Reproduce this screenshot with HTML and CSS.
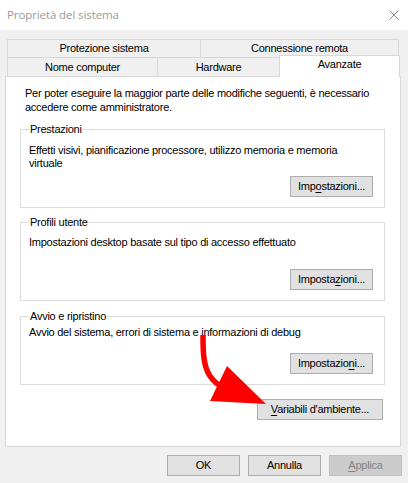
FILE: index.html
```html
<!DOCTYPE html>
<html lang="it">
<head>
<meta charset="utf-8">
<title>Proprietà del sistema</title>
<link rel="stylesheet" href="styles.css">
</head>
<body>
<div class="window">
  <div class="titlebar">
    <span class="title">Proprietà del sistema</span>
    <svg class="close" width="10" height="10" viewBox="0 0 10 10"><path d="M0.5 0.5 L9.5 9.5 M9.5 0.5 L0.5 9.5" stroke="#8c8c8c" stroke-width="1" fill="none"/></svg>
  </div>
  <div class="content">
    <div class="tabs">
      <div class="tabrow row1">
        <div class="tab t-prot">Protezione sistema</div>
        <div class="tab t-conn">Connessione remota</div>
      </div>
      <div class="tabrow row2">
        <div class="tab t-nome">Nome computer</div>
        <div class="tab t-hw">Hardware</div>
        <div class="tab active t-adv">Avanzate</div>
      </div>
    </div>
    <div class="panel">
      <p class="intro">Per poter eseguire la maggior parte delle modifiche seguenti, è necessario accedere come amministratore.</p>
      <fieldset class="group g-perf">
        <legend>Prestazioni</legend>
        <p class="gtext">Effetti visivi, pianificazione processore, utilizzo memoria e memoria virtuale</p>
        <div class="btnrow"><button class="btn set">Imp<u>o</u>stazioni...</button></div>
      </fieldset>
      <fieldset class="group g-prof">
        <legend>Profili utente</legend>
        <p class="gtext">Impostazioni desktop basate sul tipo di accesso effettuato</p>
        <div class="btnrow"><button class="btn set">Imposta<u>z</u>ioni...</button></div>
      </fieldset>
      <fieldset class="group g-boot">
        <legend>Avvio e ripristino</legend>
        <p class="gtext">Avvio del sistema, errori di sistema e informazioni di debug</p>
        <div class="btnrow"><button class="btn set">Impostazio<u>n</u>i...</button></div>
      </fieldset>
      <div class="envrow"><button class="btn env"><u>V</u>ariabili d'ambiente...</button></div>
    </div>
    <div class="footer">
      <button class="btn foot">OK</button>
      <button class="btn foot">Annulla</button>
      <button class="btn foot disabled"><u>A</u>pplica</button>
    </div>
  </div>
  <svg class="arrow" width="408" height="483" viewBox="0 0 408 483">
    <path d="M203 335 C203 350 203 366 210 376 C214 382 218 385 224 388" stroke="#ff0000" stroke-width="5.5" fill="none" stroke-linecap="butt"/>
    <polygon points="227,366 210,401 266,404" fill="#ff0000"/>
  </svg>
</div>
</body>
</html>
```
FILE: styles.css
```css
html, body {
  margin: 0;
  padding: 0;
}
body {
  background: #f0f0f0;
  font-family: "Liberation Sans", Arial, sans-serif;
  font-size: 11px;
  letter-spacing: -0.25px;
  color: #000;
  width: 408px;
  height: 483px;
  overflow: hidden;
}
.window {
  position: relative;
  width: 408px;
  height: 483px;
}
.titlebar {
  height: 30px;
  background: #fff;
  display: flex;
  align-items: center;
  justify-content: space-between;
  padding: 0 9px 0 7px;
  box-sizing: border-box;
}
.title {
  font-family: "Open Sans", "Noto Sans", sans-serif;
  font-size: 11.5px;
  letter-spacing: -0.1px;
  color: #999999;
  margin-top: -1px;
}
.close {
  display: block;
}
.content {
  padding-top: 9px;
}
.tabs {
  margin-left: 7px;
}
.tabrow {
  display: flex;
}
.tab {
  box-sizing: border-box;
  background: #f0f0f0;
  border: 1px solid #d9d9d9;
  border-bottom: none;
  text-align: center;
  line-height: 17px;
  white-space: nowrap;
}
.row1 .tab {
  height: 18px;
}
.t-prot { width: 194px; }
.t-conn { width: 199px; margin-left: -1px; }
.row2 {
  height: 19px;
  align-items: flex-end;
}
.row2 .tab {
  height: 19px;
  line-height: 18px;
}
.t-nome { width: 151px; }
.t-hw { width: 123px; margin-left: -1px; }
.row2 .tab.active {
  width: 121px;
  margin-left: -1px;
  height: 22px;
  margin-bottom: -1px;
  background: #fff;
  line-height: 17px;
  position: relative;
  z-index: 1;
}
.panel {
  box-sizing: border-box;
  margin-left: 5px;
  width: 396px;
  height: 371px;
  background: #fff;
  border: 1px solid #d9d9d9;
  padding: 9px 0 0 0;
}
.intro {
  margin: 0 10px 0 19px;
  line-height: 14px;
}
.group {
  margin: 9px 15px 0 14px;
  border: 1px solid #dcdcdc;
  padding: 0 11px 10px 8px;
  min-width: 0;
}
.group legend {
  padding: 0 1px;
  line-height: 13px;
  margin-left: 0;
}
.gtext {
  margin: 8px 0 0 0;
  line-height: 13px;
}
.btnrow {
  display: flex;
  justify-content: flex-end;
  margin-top: 6px;
}
.g-prof {
  margin-top: 8px;
}
.g-prof .gtext {
  margin-top: 7px;
}
.g-prof .btnrow {
  margin-top: 20px;
}
.g-boot {
  margin-top: 9px;
}
.g-boot .gtext {
  margin-top: 3px;
}
.g-boot .btnrow {
  margin-top: 14px;
}
.btn {
  box-sizing: border-box;
  font-family: "Liberation Sans", Arial, sans-serif;
  font-size: 11px;
  letter-spacing: -0.25px;
  color: #000;
  background: #e1e1e1;
  border: 1px solid #adadad;
  border-radius: 0;
  height: 21px;
  padding: 0;
  margin: 0;
  line-height: 19px;
}
.btn u {
  text-decoration-thickness: 1px;
  text-underline-offset: 2px;
}
.set {
  width: 83px;
}
.envrow {
  display: flex;
  justify-content: flex-end;
  margin: 14px 17px 0 0;
}
.env {
  width: 126px;
}
.footer {
  display: flex;
  justify-content: flex-end;
  gap: 8px;
  margin-top: 8px;
  padding-right: 6px;
}
.foot {
  width: 73px;
}
.foot.disabled {
  background: #cccccc;
  border-color: #bfbfbf;
  color: #838383;
}
.arrow {
  position: absolute;
  left: 0;
  top: 0;
  pointer-events: none;
}
```
